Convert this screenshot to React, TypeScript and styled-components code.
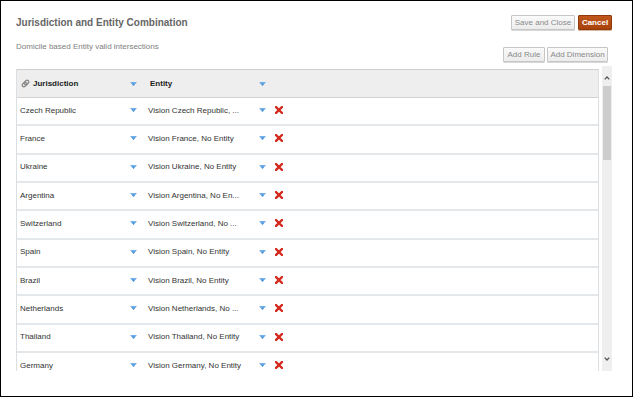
import React from "react";
import styled, { createGlobalStyle } from "styled-components";

const Global = createGlobalStyle`
  html, body { margin: 0; padding: 0; background: #fff; }
  body { font-family: "Liberation Sans", Arial, sans-serif; }
  * { box-sizing: border-box; }
`;

const Frame = styled.div`
  width: 633px;
  height: 397px;
  border: 1px solid #000;
  background: #fff;
  overflow: hidden;
  display: flex;
  flex-direction: column;
  padding: 0 20px 0 15px;
`;

const TopBar = styled.div`
  display: flex;
  justify-content: space-between;
  align-items: center;
  margin-top: 14px;
  height: 15px;
`;

const Title = styled.h1`
  margin: 0;
  font-size: 10px;
  font-weight: bold;
  color: #666;
  line-height: 14px;
`;

const ButtonGroup = styled.div<{ $gap: number }>`
  display: flex;
  gap: ${(p) => p.$gap}px;
`;

const Button = styled.button<{ $primary?: boolean; $w: number }>`
  width: ${(p) => p.$w}px;
  height: 15px;
  padding: 0;
  font-family: "Liberation Sans", Arial, sans-serif;
  font-size: 8px;
  line-height: 13px;
  text-align: center;
  border: 1px solid ${(p) => (p.$primary ? "#8e3a0c" : "#c6c6c6")};
  background: ${(p) =>
    p.$primary ? "linear-gradient(#c0561c, #a8420b)" : "linear-gradient(#fafafa, #ececec)"};
  color: ${(p) => (p.$primary ? "#fff" : "#8a8a8a")};
  font-weight: ${(p) => (p.$primary ? "bold" : "normal")};
  box-shadow: 0 1px 0 ${(p) => (p.$primary ? "#d8b8a0" : "#d8d8d8")};
  border-radius: 1px;
`;

const SubRow = styled.div`
  display: flex;
  justify-content: space-between;
  align-items: flex-start;
  margin-top: 2px;
  padding-right: 4px;
  height: 34px;
`;

const Subtitle = styled.p`
  margin: 0;
  margin-top: 10px;
  font-size: 8px;
  line-height: 10px;
  color: #808080;
`;

const SubButtons = styled(ButtonGroup)`
  margin-top: 15px;
`;

const GridArea = styled.div`
  display: flex;
  gap: 3px;
  align-items: flex-start;
`;

const Table = styled.div`
  width: 583px;
  height: 302px;
  margin-top: 3px;
  border-left: 1px solid #d9dfe2;
  border-right: 1px solid #d9dfe2;
  overflow: hidden;
`;

const COLS = "111px 11px 117px 12px 1fr";

const HeaderRow = styled.div`
  display: grid;
  grid-template-columns: ${COLS};
  align-items: center;
  height: 29px;
  background: #eeeeee;
  border-top: 1px solid #cfcfcf;
  border-bottom: 1px solid #d3d3d3;
`;

const HeadCell = styled.div<{ $pad: number }>`
  display: flex;
  align-items: center;
  gap: 3px;
  padding-left: ${(p) => p.$pad}px;
  font-size: 8px;
  font-weight: bold;
  color: #222;
`;

const Row = styled.div`
  display: grid;
  grid-template-columns: ${COLS};
  align-items: center;
  height: 28.33px;
  padding-bottom: 2px;
  border-bottom: 2px solid #e5e8ea;
`;

const Cell = styled.div<{ $pad: number }>`
  padding-left: ${(p) => p.$pad}px;
  font-size: 8px;
  color: #333;
  white-space: nowrap;
  overflow: hidden;
`;

const IconCell = styled.div<{ $pad?: number }>`
  display: flex;
  justify-content: ${(p) => (p.$pad !== undefined ? "flex-start" : "center")};
  padding-left: ${(p) => p.$pad ?? 0}px;
  align-items: center;
`;

const Scrollbar = styled.div`
  width: 10px;
  height: 305px;
  background: #efefef;
  display: flex;
  flex-direction: column;
  align-items: center;
`;

const ScrollArrow = styled.div<{ $top: number }>`
  margin-top: ${(p) => p.$top}px;
  height: 5px;
  display: flex;
  align-items: center;
`;

const Thumb = styled.div`
  width: 8px;
  height: 74px;
  margin-top: 6px;
  background: #cdcdcd;
`;

const DropArrow = () => (
  <svg width="7" height="4" viewBox="0 0 7 4">
    <defs>
      <linearGradient id="dg" x1="0" y1="0" x2="0" y2="1">
        <stop offset="0" stopColor="#7db8ee" />
        <stop offset="1" stopColor="#2f7fd0" />
      </linearGradient>
    </defs>
    <polygon points="0,0 7,0 3.5,4" fill="url(#dg)" />
  </svg>
);

const DeleteX = () => (
  <svg width="8" height="8" viewBox="0 0 8 8">
    <path
      d="M1 1 L7 7 M7 1 L1 7"
      stroke="#d42a1e"
      strokeWidth="2.4"
      strokeLinecap="square"
    />
  </svg>
);

const Clip = () => (
  <svg width="9" height="9" viewBox="0 0 9 9">
    <g transform="rotate(-45 4.5 4.5)" fill="none" stroke="#888" strokeWidth="1.3">
      <rect x="0.5" y="2.8" width="5" height="3.4" rx="1.7" />
      <rect x="3.5" y="2.8" width="5" height="3.4" rx="1.7" />
    </g>
  </svg>
);

const Chevron = ({ up }: { up?: boolean }) => (
  <svg width="6" height="4" viewBox="0 0 6 4">
    <path
      d={up ? "M0.7 3.4 L3 1 L5.3 3.4" : "M0.7 0.6 L3 3 L5.3 0.6"}
      fill="none"
      stroke="#555"
      strokeWidth="1.3"
    />
  </svg>
);

const rows: [string, string][] = [
  ["Czech Republic", "Vision Czech Republic, ..."],
  ["France", "Vision France, No Entity"],
  ["Ukraine", "Vision Ukraine, No Entity"],
  ["Argentina", "Vision Argentina, No En..."],
  ["Switzerland", "Vision Switzerland, No ..."],
  ["Spain", "Vision Spain, No Entity"],
  ["Brazil", "Vision Brazil, No Entity"],
  ["Netherlands", "Vision Netherlands, No ..."],
  ["Thailand", "Vision Thailand, No Entity"],
  ["Germany", "Vision Germany, No Entity"],
];

export default function App() {
  return (
    <>
      <Global />
      <Frame>
        <TopBar>
          <Title>Jurisdiction and Entity Combination</Title>
          <ButtonGroup $gap={3}>
            <Button $w={64}>Save and Close</Button>
            <Button $w={34} $primary>
              Cancel
            </Button>
          </ButtonGroup>
        </TopBar>
        <SubRow>
          <Subtitle>Domicile based Entity valid intersections</Subtitle>
          <SubButtons $gap={2}>
            <Button $w={42}>Add Rule</Button>
            <Button $w={61}>Add Dimension</Button>
          </SubButtons>
        </SubRow>
        <GridArea>
          <Table>
            <HeaderRow>
              <HeadCell $pad={4}>
                <Clip />
                Jurisdiction
              </HeadCell>
              <IconCell>
                <DropArrow />
              </IconCell>
              <HeadCell $pad={11}>Entity</HeadCell>
              <IconCell>
                <DropArrow />
              </IconCell>
              <div />
            </HeaderRow>
            {rows.map(([j, e]) => (
              <Row key={j}>
                <Cell $pad={3}>{j}</Cell>
                <IconCell>
                  <DropArrow />
                </IconCell>
                <Cell $pad={9}>{e}</Cell>
                <IconCell>
                  <DropArrow />
                </IconCell>
                <IconCell $pad={7}>
                  <DeleteX />
                </IconCell>
              </Row>
            ))}
          </Table>
          <Scrollbar>
            <ScrollArrow $top={9}>
              <Chevron up />
            </ScrollArrow>
            <Thumb />
            <ScrollArrow $top={196}>
              <Chevron />
            </ScrollArrow>
          </Scrollbar>
        </GridArea>
      </Frame>
    </>
  );
}
